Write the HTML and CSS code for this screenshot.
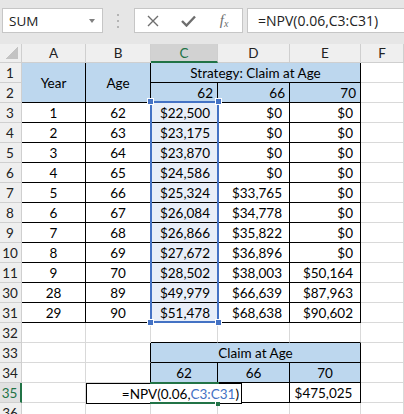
FILE: index.html
```html
<!DOCTYPE html>
<html lang="en">
<head>
    <meta charset="utf-8">
    <title>NPV - Claim at Age</title>
    <link rel="stylesheet" href="styles.css">
</head>
<body>
    <div class="formula-bar">
        <div class="name-box">
            <span>SUM</span>
            <span class="drop"></span>
        </div>
        <div class="grip">
            <svg width="3" height="14" viewBox="0 0 3 14"><rect x="0" y="0" width="2" height="2" fill="#b4b4b4"/><rect x="0" y="6" width="2" height="2" fill="#b4b4b4"/><rect x="0" y="12" width="2" height="2" fill="#b4b4b4"/></svg>
        </div>
        <div class="fx-buttons">
            <svg width="12" height="12" viewBox="0 0 12 12"><path d="M1 1 L11 11 M11 1 L1 11" stroke="#6e6e6e" stroke-width="1.4" fill="none"/></svg>
            <svg width="15" height="12" viewBox="0 0 15 12"><path d="M1 6 L5.5 10.5 L14 1.5" stroke="#6e6e6e" stroke-width="2.4" fill="none"/></svg>
            <span class="fx">f<sub>x</sub></span>
        </div>
        <div class="formula-input">=NPV(0.06,C3:C31)</div>
    </div>

    <div class="sheet">
        <div class="grid">
            <!-- column headers -->
            <div class="corner"><span class="tri"></span></div>
            <div class="ch">A</div>
            <div class="ch">B</div>
            <div class="ch active-col">C</div>
            <div class="ch">D</div>
            <div class="ch">E</div>
            <div class="ch">F</div>

            <!-- rows 1-2 -->
            <div class="rh">1</div>
            <div class="cell ctr fill br bb span-r2">Year</div>
            <div class="cell ctr fill br bb span-r2">Age</div>
            <div class="cell ctr fill br bb span-c3">Strategy: Claim at Age</div>
            <div class="cell"></div>
            <div class="rh">2</div>
            <div class="cell num fill br bb">62</div>
            <div class="cell num fill br bb">66</div>
            <div class="cell num fill br bb">70</div>
            <div class="cell"></div>

            <div class="rh">3</div>
            <div class="cell ctr br bb">1</div><div class="cell ctr br bb">62</div>
            <div class="cell money sel br bb">$22,500</div><div class="cell money br bb">$0</div><div class="cell money br bb">$0</div><div class="cell"></div>
            <div class="rh">4</div>
            <div class="cell ctr br bb">2</div><div class="cell ctr br bb">63</div>
            <div class="cell money sel br bb">$23,175</div><div class="cell money br bb">$0</div><div class="cell money br bb">$0</div><div class="cell"></div>
            <div class="rh">5</div>
            <div class="cell ctr br bb">3</div><div class="cell ctr br bb">64</div>
            <div class="cell money sel br bb">$23,870</div><div class="cell money br bb">$0</div><div class="cell money br bb">$0</div><div class="cell"></div>
            <div class="rh">6</div>
            <div class="cell ctr br bb">4</div><div class="cell ctr br bb">65</div>
            <div class="cell money sel br bb">$24,586</div><div class="cell money br bb">$0</div><div class="cell money br bb">$0</div><div class="cell"></div>
            <div class="rh">7</div>
            <div class="cell ctr br bb">5</div><div class="cell ctr br bb">66</div>
            <div class="cell money sel br bb">$25,324</div><div class="cell money br bb">$33,765</div><div class="cell money br bb">$0</div><div class="cell"></div>
            <div class="rh">8</div>
            <div class="cell ctr br bb">6</div><div class="cell ctr br bb">67</div>
            <div class="cell money sel br bb">$26,084</div><div class="cell money br bb">$34,778</div><div class="cell money br bb">$0</div><div class="cell"></div>
            <div class="rh">9</div>
            <div class="cell ctr br bb">7</div><div class="cell ctr br bb">68</div>
            <div class="cell money sel br bb">$26,866</div><div class="cell money br bb">$35,822</div><div class="cell money br bb">$0</div><div class="cell"></div>
            <div class="rh">10</div>
            <div class="cell ctr br bb">8</div><div class="cell ctr br bb">69</div>
            <div class="cell money sel br bb">$27,672</div><div class="cell money br bb">$36,896</div><div class="cell money br bb">$0</div><div class="cell"></div>
            <div class="rh">11</div>
            <div class="cell ctr br bb">9</div><div class="cell ctr br bb">70</div>
            <div class="cell money sel br bb">$28,502</div><div class="cell money br bb">$38,003</div><div class="cell money br bb">$50,164</div><div class="cell"></div>
            <div class="rh">30</div>
            <div class="cell ctr br bb">28</div><div class="cell ctr br bb">89</div>
            <div class="cell money sel br bb">$49,979</div><div class="cell money br bb">$66,639</div><div class="cell money br bb">$87,963</div><div class="cell"></div>
            <div class="rh">31</div>
            <div class="cell ctr br bb">29</div><div class="cell ctr br bb">90</div>
            <div class="cell money sel br bb">$51,478</div><div class="cell money br bb">$68,638</div><div class="cell money br bb">$90,602</div><div class="cell"></div>

            <!-- rows 32-36 -->
            <div class="rh">32</div>
            <div class="cell"></div><div class="cell"></div>
            <div class="cell bb"></div><div class="cell bb"></div><div class="cell bb"></div><div class="cell"></div>
            <div class="rh">33</div>
            <div class="cell"></div><div class="cell br"></div>
            <div class="cell ctr fill br bb span-c3">Claim at Age</div><div class="cell"></div>
            <div class="rh">34</div>
            <div class="cell"></div><div class="cell br"></div>
            <div class="cell ctr fill br bb">62</div><div class="cell ctr fill br bb">66</div><div class="cell ctr fill br bb">70</div><div class="cell"></div>
            <div class="rh active-row">35</div>
            <div class="cell"></div><div class="cell br"></div>
            <div class="cell br bb"></div><div class="cell br bb"></div><div class="cell ctr total br bb">$475,025</div><div class="cell"></div>
            <div class="rh">36</div>
            <div class="cell"></div><div class="cell"></div><div class="cell"></div><div class="cell"></div><div class="cell"></div><div class="cell"></div>
        </div>

        <!-- formula reference highlight C3:C31 -->
        <div class="range">
            <span class="handle tl"></span>
            <span class="handle tr"></span>
            <span class="handle bl"></span>
            <span class="handle br-h"></span>
        </div>

        <!-- in-cell editor for C35 -->
        <div class="editor">=NPV(0.06,<span class="ref">C3:C31</span>)</div>
        <div class="active-cell"><span class="fill-handle"></span></div>
    </div>
</body>
</html>
```

FILE: styles.css
```css
:root {
    --bar-bg: #e6e6e6;
    --header-bg: #efefef;
    --header-line: #cfcfcf;
    --grid-line: #d9d9d9;
    --fill-blue: #bdd7ee;
    --sel-bg: #e8eef8;
    --ref-blue: #4472c4;
    --excel-green: #217346;
}

body {
    margin: 0;
    width: 404px;
    height: 414px;
    overflow: hidden;
    background: #ffffff;
    font-family: Lato, "Liberation Sans", sans-serif;
    font-size: 13.5px;
    color: #000;
}

/* ---- formula bar ---- */

.formula-bar {
    display: flex;
    height: 44px;
    box-sizing: border-box;
    padding: 8px 0 11px 2px;
    background: var(--bar-bg);
    font-family: "Open Sans", "Liberation Sans", sans-serif;
    font-size: 13.5px;
    color: #222;
}

.name-box {
    width: 101px;
    box-sizing: border-box;
    display: flex;
    align-items: center;
    justify-content: space-between;
    padding: 0 6px 0 6px;
    background: #fff;
    border: 1px solid #c6c6c6;
}

.drop {
    width: 0;
    height: 0;
    border-left: 3px solid transparent;
    border-right: 3px solid transparent;
    border-top: 4px solid #808080;
    margin-right: 1px;
}

.grip {
    width: 31px;
    display: flex;
    align-items: center;
    justify-content: center;
}

.fx-buttons {
    width: 109px;
    box-sizing: border-box;
    display: grid;
    grid-template-columns: repeat(3, 1fr);
    align-items: center;
    justify-items: center;
    background: #fff;
    border: 1px solid #c6c6c6;
}

.fx {
    font-family: "Liberation Serif", serif;
    font-style: italic;
    font-size: 15px;
    color: #6e6e6e;
    line-height: 1;
}

.fx sub {
    font-size: 10px;
    vertical-align: -2px;
}

.formula-input {
    flex: 1;
    margin-left: 4px;
    margin-right: -2px;
    display: flex;
    align-items: center;
    padding-left: 10px;
    background: #fff;
    border: 1px solid #c6c6c6;
    font-size: 14px;
}

/* ---- sheet ---- */

.sheet {
    position: relative;
}

.grid {
    display: grid;
    grid-template-columns: 22px 64px 65px 67px 72px 71px 43px;
    grid-template-rows: 19px;
    grid-auto-rows: 20px;
}

.grid > div {
    box-sizing: border-box;
    display: flex;
    align-items: center;
    white-space: nowrap;
    overflow: hidden;
}

.corner,
.ch,
.rh {
    background: var(--header-bg);
    border-right: 1px solid var(--header-line);
    border-bottom: 1px solid var(--header-line);
    color: #222;
}

.corner {
    justify-content: flex-end;
    align-items: flex-end !important;
    padding: 0 3px 3px 0;
}

.tri {
    width: 12px;
    height: 12px;
    background: linear-gradient(to bottom right, transparent 50%, #c3c3c3 50%);
}

.ch {
    justify-content: center;
}

.active-col {
    background: #d2d2d2;
    color: var(--excel-green);
    border-bottom: 2px solid var(--excel-green);
}

.rh {
    justify-content: center;
    padding-right: 1px;
}

.active-row {
    background: #e1e1e1;
    color: var(--excel-green);
    border-right: 2px solid var(--excel-green);
}

.cell {
    padding: 0 4px;
    border-right: 1px solid var(--grid-line);
    border-bottom: 1px solid var(--grid-line);
    background: #fff;
}

.ctr { justify-content: center; }
.num { justify-content: flex-end; }
.money { justify-content: flex-end; padding-right: 7px; }
.total { padding-right: 7px; }

.fill { background: var(--fill-blue); }
.sel { background: var(--sel-bg); }

.br { border-right-color: #000 !important; }
.bb { border-bottom-color: #000 !important; }

.span-r2 { grid-row: span 2; }
.span-c3 { grid-column: span 3; }

/* ---- overlays ---- */

.range {
    position: absolute;
    left: 150px;
    top: 57px;
    width: 69px;
    height: 222px;
    box-sizing: border-box;
    border: 2px solid var(--ref-blue);
}

.handle {
    position: absolute;
    width: 5px;
    height: 5px;
    background: var(--ref-blue);
    border: 1px solid #fff;
}

.handle.tl { left: -5px; top: -5px; }
.handle.tr { right: -5px; top: -5px; }
.handle.bl { left: -5px; bottom: -5px; }
.handle.br-h { right: -5px; bottom: -5px; }

.editor {
    position: absolute;
    left: 86px;
    top: 339px;
    width: 156px;
    height: 21px;
    box-sizing: border-box;
    display: flex;
    align-items: center;
    justify-content: flex-end;
    padding-right: 2px;
    background: #fff;
    border: 1px solid #000;
    white-space: nowrap;
}

.ref { color: var(--ref-blue); }

.active-cell {
    position: absolute;
    left: 150px;
    top: 338px;
    width: 69px;
    height: 22px;
    box-sizing: border-box;
    border-top: 2px solid var(--excel-green);
    border-bottom: 2px solid var(--excel-green);
}

.fill-handle {
    position: absolute;
    right: -1px;
    bottom: -4px;
    width: 4px;
    height: 4px;
    background: var(--excel-green);
    border-left: 1px solid #fff;
}
```
